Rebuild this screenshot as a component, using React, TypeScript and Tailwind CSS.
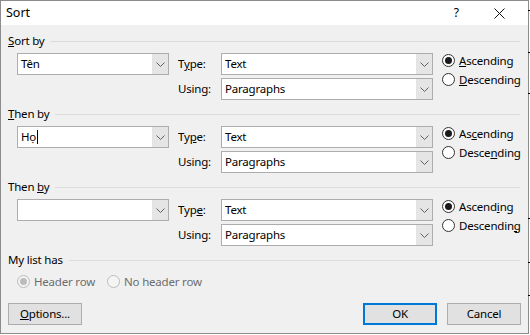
import type { ReactNode } from 'react'

const FONT = { fontFamily: '"Noto Sans", "Segoe UI", sans-serif' }

function Chevron() {
  return (
    <svg width="9" height="5" viewBox="0 0 9 5" aria-hidden="true">
      <polyline points="0.5,0.5 4.5,4.5 8.5,0.5" fill="none" stroke="#606060" strokeWidth="1" />
    </svg>
  )
}

function Combo({ value, width, cursor }: { value?: string; width: string; cursor?: boolean }) {
  return (
    <div className={`flex h-[22px] ${width} border border-[#adadad] bg-white`}>
      <div className="flex flex-1 items-center pl-[3px] text-black">
        {value}
        {cursor && <span className="ml-[1px] h-[14px] w-px bg-black" />}
      </div>
      <div className="flex w-[16px] items-center justify-center border-l border-[#e3e3e3] bg-[#e5e5e5]">
        <Chevron />
      </div>
    </div>
  )
}

function Radio({
  checked,
  disabled,
  children,
}: {
  checked?: boolean
  disabled?: boolean
  children: ReactNode
}) {
  return (
    <div className={`flex items-center gap-[4px] ${disabled ? 'text-[#6d6d6d]' : 'text-black'}`}>
      <span
        className={`flex h-[13px] w-[13px] items-center justify-center rounded-full border ${
          disabled ? 'border-[#bcbcbc] bg-[#f4f4f4]' : 'border-[#333333] bg-white'
        }`}
      >
        {checked && (
          <span className={`h-[7px] w-[7px] rounded-full ${disabled ? 'bg-[#bcbcbc]' : 'bg-[#1a1a1a]'}`} />
        )}
      </span>
      <span>{children}</span>
    </div>
  )
}

function GroupLabel({ children }: { children: ReactNode }) {
  return (
    <div className="flex h-[14px] items-center gap-[6px] pl-[7px] pr-[8px]">
      <span className="whitespace-nowrap text-black">{children}</span>
      <span className="h-px flex-1 bg-[#dcdcdc]" />
    </div>
  )
}

function SortSection({
  label,
  value,
  cursor,
  typeLabel,
  asc,
  desc,
}: {
  label: ReactNode
  value?: string
  cursor?: boolean
  typeLabel: ReactNode
  asc: ReactNode
  desc: ReactNode
}) {
  return (
    <div className="h-[73px]">
      <GroupLabel>{label}</GroupLabel>
      <div className="mt-[5px] flex pl-[16px]">
        <Combo value={value} cursor={cursor} width="w-[152px]" />
        <div className="ml-[9px] flex flex-col gap-[3px]">
          <div className="flex items-center">
            <span className="w-[43px]">{typeLabel}</span>
            <Combo value="Text" width="w-[212px]" />
          </div>
          <div className="flex items-center">
            <span className="w-[43px]">Using:</span>
            <Combo value="Paragraphs" width="w-[212px]" />
          </div>
        </div>
        <div className="ml-[9px] flex flex-col gap-[6px] pt-[1px]">
          <Radio checked>{asc}</Radio>
          <Radio>{desc}</Radio>
        </div>
      </div>
    </div>
  )
}

function Button({ children, primary }: { children: ReactNode; primary?: boolean }) {
  return (
    <div
      className={`flex h-[22px] w-[74px] items-center justify-center bg-[#e1e1e1] text-black ${
        primary ? 'border-2 border-[#0078d7]' : 'border border-[#adadad]'
      }`}
    >
      {children}
    </div>
  )
}

export default function App() {
  return (
    <div
      className="relative h-[335px] w-[530px] overflow-hidden bg-white text-[11.5px] leading-none tracking-[-0.2px]"
      style={FONT}
    >
      <div className="flex h-[334px] w-[529px] flex-col border border-[#8c8c8c] bg-[#f0f0f0]">
        {/* Title bar */}
        <div className="flex h-[24px] items-center bg-white pl-[5px] text-black tracking-normal">
          <span className="flex-1 text-[12.5px]">Sort</span>
          <span className="mr-[35px] text-[12px]">?</span>
          <svg width="11" height="11" viewBox="0 0 11 11" className="mr-[23px]" aria-hidden="true">
            <path d="M0.5 0.5 L10.5 10.5 M10.5 0.5 L0.5 10.5" stroke="#111" strokeWidth="1" />
          </svg>
        </div>

        {/* Body */}
        <div className="flex flex-1 flex-col pt-[9px]">
          <SortSection
            label={<><u>S</u>ort by</>}
            value="Tên"
            typeLabel={<>T<u>y</u>pe:</>}
            asc={<><u>A</u>scending</>}
            desc={<><u>D</u>escending</>}
          />
          <SortSection
            label={<><u>T</u>hen by</>}
            value="Họ"
            cursor
            typeLabel={<>Ty<u>p</u>e:</>}
            asc={<>As<u>c</u>ending</>}
            desc={<>Desce<u>n</u>ding</>}
          />
          <SortSection
            label={<>Then <u>b</u>y</>}
            typeLabel={<>Typ<u>e</u>:</>}
            asc={<>Ascend<u>i</u>ng</>}
            desc={<>Descendin<u>g</u></>}
          />

          <GroupLabel>My list has</GroupLabel>
          <div className="mt-[8px] flex gap-[12px] pl-[16px]">
            <Radio checked disabled>Header row</Radio>
            <Radio disabled>No header row</Radio>
          </div>

          <div className="mt-[15px] flex items-center pl-[7px] pr-[7px]">
            <Button><><u>O</u>ptions...</></Button>
            <div className="flex-1" />
            <Button primary>OK</Button>
            <div className="w-[10px]" />
            <Button>Cancel</Button>
          </div>
        </div>
      </div>

      {/* ruler ticks of the window behind */}
      <span className="absolute left-[528px] top-[10px] h-px w-[2px] bg-black" />
      <span className="absolute left-[528px] top-[52px] h-px w-[2px] bg-black" />
      <span className="absolute left-[528px] top-[93px] h-px w-[2px] bg-black" />
      <span className="absolute left-[528px] top-[218px] h-px w-[2px] bg-black" />
      <span className="absolute left-[528px] top-[262px] h-px w-[2px] bg-black" />
      <span className="absolute left-[528px] top-[295px] h-px w-[2px] bg-black" />
    </div>
  )
}
